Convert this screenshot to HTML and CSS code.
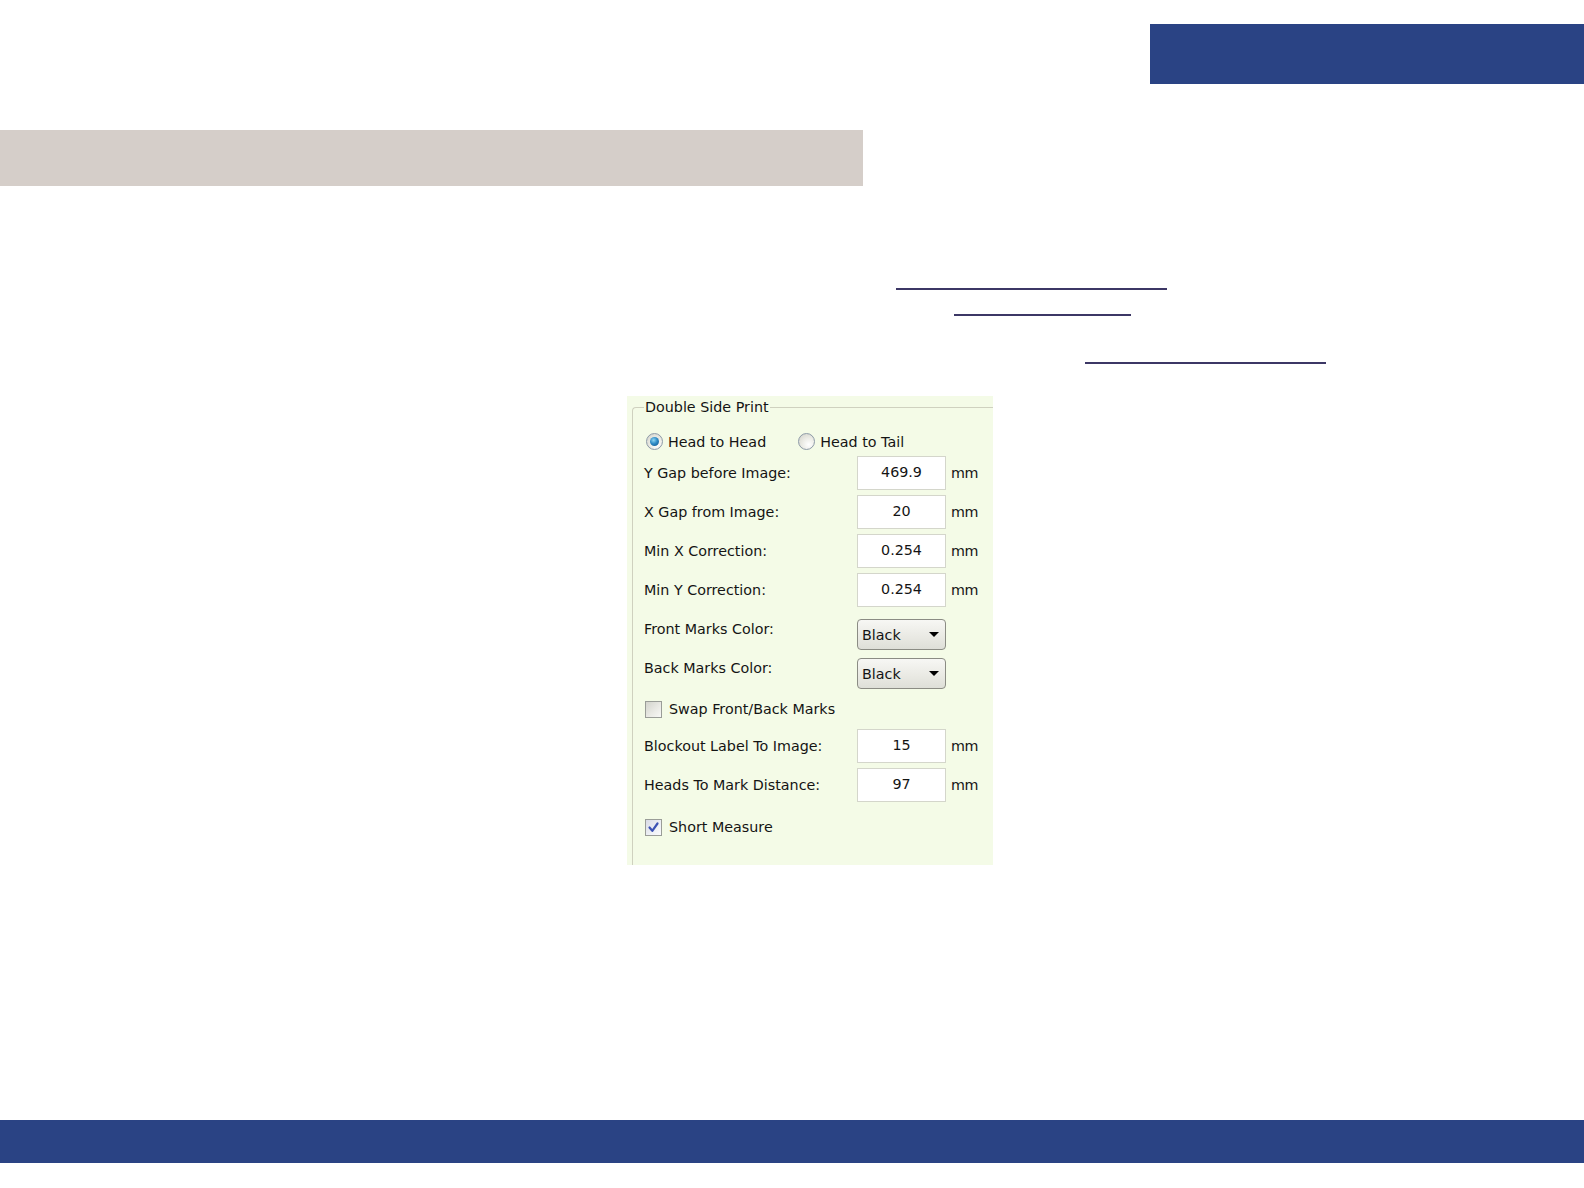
FILE: index.html
```html
<!DOCTYPE html>
<html lang="en">
<head>
<meta charset="utf-8">
<title>Double Side Print</title>
<link rel="stylesheet" href="styles.css">
</head>
<body>
<header class="top">
  <div class="topbar"></div>
</header>
<div class="graybar"></div>

<nav class="links">
  <a class="link link-1" href="#" aria-label="link"></a>
  <a class="link link-2" href="#" aria-label="link"></a>
  <a class="link link-3" href="#" aria-label="link"></a>
</nav>

<section class="panel">
  <fieldset class="group">
    <legend>Double Side Print</legend>

    <div class="row row-radio">
      <span class="radio checked"></span><span class="rlabel">Head to Head</span>
      <span class="radio radio-2"></span><span class="rlabel">Head to Tail</span>
    </div>

    <div class="row">
      <span class="label">Y Gap before Image:</span>
      <input class="field" type="text" value="469.9" readonly>
      <span class="unit">mm</span>
    </div>
    <div class="row">
      <span class="label">X Gap from Image:</span>
      <input class="field" type="text" value="20" readonly>
      <span class="unit">mm</span>
    </div>
    <div class="row">
      <span class="label">Min X Correction:</span>
      <input class="field" type="text" value="0.254" readonly>
      <span class="unit">mm</span>
    </div>
    <div class="row">
      <span class="label">Min Y Correction:</span>
      <input class="field" type="text" value="0.254" readonly>
      <span class="unit">mm</span>
    </div>
    <div class="row">
      <span class="label">Front Marks Color:</span>
      <div class="select"><span>Black</span><span class="arrow"></span></div>
    </div>
    <div class="row">
      <span class="label">Back Marks Color:</span>
      <div class="select"><span>Black</span><span class="arrow"></span></div>
    </div>
    <div class="row row-check">
      <span class="check"></span><span class="clabel">Swap Front/Back Marks</span>
    </div>
    <div class="row">
      <span class="label">Blockout Label To Image:</span>
      <input class="field" type="text" value="15" readonly>
      <span class="unit">mm</span>
    </div>
    <div class="row">
      <span class="label">Heads To Mark Distance:</span>
      <input class="field" type="text" value="97" readonly>
      <span class="unit">mm</span>
    </div>
    <div class="row row-check row-check-last">
      <span class="check checked"><svg viewBox="0 0 15 15" width="15" height="15"><path d="M3.5 7.5 L6.3 10.8 L11.5 3.5" fill="none" stroke="#3c52b4" stroke-width="2.2" stroke-linecap="round" stroke-linejoin="round"/></svg></span><span class="clabel">Short Measure</span>
    </div>
  </fieldset>
</section>

<footer class="bottombar"></footer>
</body>
</html>
```

FILE: styles.css
```css
html, body {
  margin: 0;
  padding: 0;
  background: #ffffff;
}

body {
  width: 1584px;
  font-family: "DejaVu Sans", "Liberation Sans", sans-serif;
}

.top {
  display: flex;
  justify-content: flex-end;
  padding-top: 24px;
}

.topbar {
  width: 434px;
  height: 60px;
  background: #2a4384;
}

.graybar {
  margin-top: 46px;
  width: 863px;
  height: 56px;
  background: #d5cec9;
}

.links {
  display: flex;
  flex-direction: column;
}

.link {
  display: block;
  height: 0;
  border-top: 2px solid #3c3765;
}

.link-1 {
  margin: 102px 0 0 896px;
  width: 271px;
}

.link-2 {
  margin: 24px 0 0 954px;
  width: 177px;
}

.link-3 {
  margin: 46px 0 0 1085px;
  width: 241px;
}

.panel {
  margin: 32px 0 0 627px;
  width: 366px;
  height: 469px;
  background: #f4fbe7;
  overflow: hidden;
  color: #141414;
  font-size: 14.3px;
}

.group {
  margin: 2px 0 0 5px;
  padding: 14px 0 0 11px;
  height: 520px;
  border: 0;
  border-top: 1px solid #cfd1bf;
  border-left: 1px solid #cfd1bf;
  border-top-left-radius: 4px;
  min-width: 0;
}

.group legend {
  padding: 0 1px;
  line-height: 18px;
}

.row {
  display: flex;
  align-items: center;
  height: 39px;
  box-sizing: border-box;
}

.row-radio {
  height: 23px;
}

.radio {
  flex: none;
  width: 17px;
  height: 17px;
  box-sizing: border-box;
  border-radius: 50%;
  border: 1px solid #8d9aa7;
  background: radial-gradient(circle at 65% 70%, #ffffff 0%, #ecece6 45%, #cfcfc6 100%);
  margin-left: 2px;
  position: relative;
}

.radio.checked::after {
  content: "";
  position: absolute;
  left: 3px;
  top: 3px;
  width: 9px;
  height: 9px;
  border-radius: 50%;
  background: radial-gradient(circle at 40% 35%, #8fd6f2 0%, #2f8bc6 45%, #0d4f86 100%);
}

.radio-2 {
  margin-left: 32px;
}

.rlabel {
  margin-left: 5px;
  line-height: 18px;
}

.label {
  flex: none;
  width: 213px;
}

.field {
  flex: none;
  width: 89px;
  height: 34px;
  box-sizing: border-box;
  margin: 0;
  padding: 0 0 2px 0;
  border: 1px solid #d4d6cb;
  background: #ffffff;
  text-align: center;
  font: inherit;
  color: #141414;
  outline: none;
}

.unit {
  margin-left: 5px;
  letter-spacing: -0.5px;
}

.select {
  flex: none;
  align-self: flex-start;
  margin-top: 10px;
  width: 89px;
  height: 31px;
  box-sizing: border-box;
  border: 1px solid #8b8c84;
  border-radius: 4px;
  background: linear-gradient(#f7f7f4, #e9e9e3 60%, #dedfd8);
  display: flex;
  align-items: center;
  justify-content: space-between;
  padding: 0 6px 0 4px;
}

.arrow {
  width: 0;
  height: 0;
  border-left: 5px solid transparent;
  border-right: 5px solid transparent;
  border-top: 5px solid #000000;
}

.row-check {
  padding-top: 5px;
}

.row-check-last {
  padding-top: 7px;
}

.check {
  flex: none;
  width: 17px;
  height: 17px;
  box-sizing: border-box;
  margin-left: 1px;
  border: 1px solid #9a9d98;
  background: linear-gradient(135deg, #d3d4cd 0%, #e9e9e4 55%, #f8f8f6 100%);
  display: flex;
  align-items: center;
  justify-content: center;
}

.check.checked {
  background: linear-gradient(135deg, #d9dbe6 0%, #eef0f5 60%, #fbfbfd 100%);
}

.clabel {
  margin-left: 7px;
}

.bottombar {
  margin-top: 255px;
  height: 43px;
  background: #2a4384;
}
```
